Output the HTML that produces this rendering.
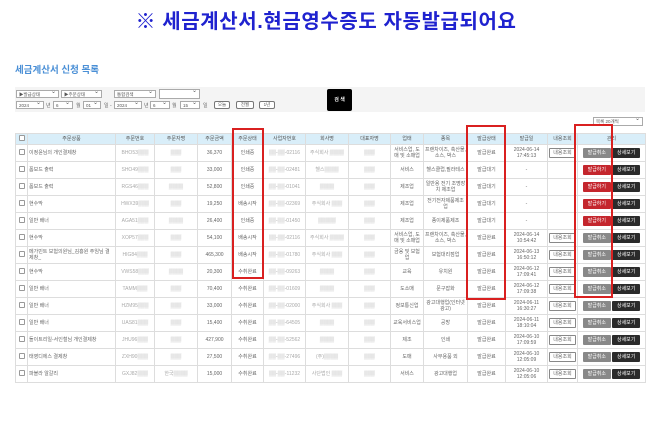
<!DOCTYPE html>
<html><head><meta charset="utf-8"><style>
*{margin:0;padding:0;box-sizing:border-box}
body{width:652px;height:444px;background:#fff;font-family:"Liberation Sans","Noto Sans CJK KR",sans-serif;position:relative;overflow:hidden;color:#555}
.a{position:absolute}
h1{position:absolute;left:0;width:652px;top:5px;text-align:center;font-size:20px;font-weight:bold;color:#1f22cf;font-family:"Liberation Sans","Noto Sans CJK KR",sans-serif;letter-spacing:0.6px}
.sub{left:15px;top:62px;font-size:9.5px;color:#4a8fd6;font-weight:bold}
.bar{left:15px;top:87px;width:630px;height:25px;background:#f4f4f4}
.sel{position:absolute;height:8px;border:1px solid #aaa;background:#fff;font-size:4.5px;line-height:7px;padding-left:2px;color:#555}
.sel:after{content:"⌄";position:absolute;right:2px;top:-2px;font-size:6px}
.t{position:absolute;font-size:5px;color:#666;top:102px}
.btn{position:absolute;top:101px;height:8px;border:1px solid #777;border-radius:2px;font-size:4.5px;line-height:6px;text-align:center;background:#fff}
.srch{left:327px;top:89px;width:25px;height:22px;background:#000;color:#fff;font-size:5px;text-align:center;line-height:22px;border-radius:2px;font-weight:bold}
table{position:absolute;left:15px;top:133px;width:630px;border-collapse:collapse;table-layout:fixed;font-size:5px;color:#666}
td,th{border:1px solid #ddd;text-align:center;height:17px;line-height:6px;overflow:hidden;padding:0 1px}
th{height:11px;background:#d9eef9;font-weight:normal;color:#555}
td.l{text-align:left}
.cb{display:inline-block;width:6px;height:6px;border:1px solid #999;border-radius:1px;background:#fff}
.b{display:inline-block;width:28px;height:10px;line-height:10px;font-size:5px;color:#fff;border-radius:1px}
.g{background:#888}.r{background:#c4262d}.d{background:#2b2b2b}
.o{display:inline-block;width:27px;height:10px;line-height:8px;border:1px solid #888;border-radius:1px;font-size:5px}
.bl{color:#aaa}
.rb{position:absolute;border:2px solid #d92020}
</style></head><body>
<h1>※ 세금계산서.현금영수증도 자동발급되어요</h1>
<div class="a sub">세금계산서 신청 목록</div>
<div class="a bar"></div>
<div class="sel" style="left:16px;top:90px;width:43px">▶발급상태</div>
<div class="sel" style="left:61px;top:90px;width:41px">▶주문상태</div>
<div class="sel" style="left:114px;top:90px;width:42px">통합검색</div>
<div class="sel" style="left:159px;top:89px;width:41px;height:10px"></div>
<div class="sel" style="left:16px;top:101px;width:28px">2024</div><span class="t" style="left:46px">년</span>
<div class="sel" style="left:53px;top:101px;width:20px">6</div><span class="t" style="left:76px">월</span>
<div class="sel" style="left:83px;top:101px;width:18px">01</div><span class="t" style="left:104px">일 -</span>
<div class="sel" style="left:114px;top:101px;width:28px">2024</div><span class="t" style="left:144px">년</span>
<div class="sel" style="left:150px;top:101px;width:20px">6</div><span class="t" style="left:172px">월</span>
<div class="sel" style="left:180px;top:101px;width:20px">15</div><span class="t" style="left:203px">일</span>
<div class="btn" style="left:214px;width:16px">오늘</div>
<div class="btn" style="left:236px;width:18px">전월</div>
<div class="btn" style="left:259px;width:16px">1년</div>
<div class="a srch">검 색</div>
<div class="sel" style="left:593px;top:117px;width:50px;height:9px">목록 20개씩</div>
<table>
<colgroup><col style="width:12px"><col style="width:88px"><col style="width:39px"><col style="width:43px"><col style="width:34px"><col style="width:32px"><col style="width:42px"><col style="width:43px"><col style="width:42px"><col style="width:33px"><col style="width:44px"><col style="width:38px"><col style="width:42px"><col style="width:30px"><col style="width:68px"></colgroup>
<tr><th><span class="cb"></span></th><th>주문상품</th><th>주문번호</th><th>주문자명</th><th>주문금액</th><th>주문상태</th><th>사업자번호</th><th>회사명</th><th>대표자명</th><th>업태</th><th>종목</th><th>발급상태</th><th>발급일</th><th>내용조회</th><th>관리</th></tr>
<tr><td><span class="cb"></span></td><td class="l">이정윤님의 개인결제창</td><td class="bl">BHO53▒▒▒</td><td class="bl">▒▒▒</td><td>36,370</td><td>인쇄중</td><td class="bl">▒▒-▒▒-02116</td><td class="bl">주식회사 ▒▒▒▒</td><td class="bl">▒▒▒</td><td>서비스업, 도매 및 소매업</td><td>프랜차이즈, 축산물, 소스, 박스</td><td>발급완료</td><td>2024-06-14<br>17:45:13</td><td><span class="o">내용조회</span></td><td><span class="b g">발급취소</span> <span class="b d">상세보기</span></td></tr>
<tr><td><span class="cb"></span></td><td class="l">폼보드 출력</td><td class="bl">SHO49▒▒▒</td><td class="bl">▒▒▒</td><td>33,000</td><td>인쇄중</td><td class="bl">▒▒-▒▒-02481</td><td class="bl">헬스▒▒▒▒</td><td class="bl">▒▒▒</td><td>서비스</td><td>헬스클럽,필라테스</td><td>발급대기</td><td>-</td><td></td><td><span class="b r">발급하기</span> <span class="b d">상세보기</span></td></tr>
<tr><td><span class="cb"></span></td><td class="l">폼보드 출력</td><td class="bl">RGS46▒▒▒</td><td class="bl">▒▒▒▒</td><td>52,800</td><td>인쇄중</td><td class="bl">▒▒-▒▒-01041</td><td class="bl">▒▒▒▒</td><td class="bl">▒▒▒</td><td>제조업</td><td>일반용 전기 조명장치 제조업</td><td>발급대기</td><td>-</td><td></td><td><span class="b r">발급하기</span> <span class="b d">상세보기</span></td></tr>
<tr><td><span class="cb"></span></td><td class="l">현수막</td><td class="bl">HWX39▒▒▒</td><td class="bl">▒▒▒</td><td>19,250</td><td>배송시작</td><td class="bl">▒▒-▒▒-02369</td><td class="bl">주식회사 ▒▒▒</td><td class="bl">▒▒▒</td><td>제조업</td><td>전기전자제품제조업</td><td>발급대기</td><td>-</td><td></td><td><span class="b r">발급하기</span> <span class="b d">상세보기</span></td></tr>
<tr><td><span class="cb"></span></td><td class="l">일반 배너</td><td class="bl">AGA51▒▒▒</td><td class="bl">▒▒▒▒</td><td>26,400</td><td>인쇄중</td><td class="bl">▒▒-▒▒-01450</td><td class="bl">▒▒▒▒▒</td><td class="bl">▒▒▒</td><td>제조업</td><td>종이제품제조</td><td>발급대기</td><td>-</td><td></td><td><span class="b r">발급하기</span> <span class="b d">상세보기</span></td></tr>
<tr><td><span class="cb"></span></td><td class="l">현수막</td><td class="bl">XOP57▒▒▒</td><td class="bl">▒▒▒</td><td>54,100</td><td>배송시작</td><td class="bl">▒▒-▒▒-02116</td><td class="bl">주식회사 ▒▒▒▒</td><td class="bl">▒▒▒</td><td>서비스업, 도매 및 소매업</td><td>프랜차이즈, 축산물, 소스, 박스</td><td>발급완료</td><td>2024-06-14<br>10:54:42</td><td><span class="o">내용조회</span></td><td><span class="b g">발급취소</span> <span class="b d">상세보기</span></td></tr>
<tr><td><span class="cb"></span></td><td class="l">메가민트 보험의원님_김흥원 주임님 결제창_</td><td class="bl">HIG84▒▒▒</td><td class="bl">▒▒▒</td><td>465,300</td><td>배송시작</td><td class="bl">▒▒-▒▒-01780</td><td class="bl">주식회사 ▒▒▒</td><td class="bl">▒▒▒</td><td>금융 및 보험업</td><td>보험대리점업</td><td>발급완료</td><td>2024-06-13<br>16:50:12</td><td><span class="o">내용조회</span></td><td><span class="b g">발급취소</span> <span class="b d">상세보기</span></td></tr>
<tr><td><span class="cb"></span></td><td class="l">현수막</td><td class="bl">VWS58▒▒▒</td><td class="bl">▒▒▒▒</td><td>20,300</td><td>수취완료</td><td class="bl">▒▒-▒▒-09263</td><td class="bl">▒▒▒▒</td><td class="bl">▒▒▒</td><td>교육</td><td>유치원</td><td>발급완료</td><td>2024-06-12<br>17:09:41</td><td><span class="o">내용조회</span></td><td><span class="b g">발급취소</span> <span class="b d">상세보기</span></td></tr>
<tr><td><span class="cb"></span></td><td class="l">일반 배너</td><td class="bl">TAMM▒▒▒</td><td class="bl">▒▒▒</td><td>70,400</td><td>수취완료</td><td class="bl">▒▒-▒▒-01609</td><td class="bl">▒▒▒▒</td><td class="bl">▒▒▒</td><td>도소매</td><td>문구잡화</td><td>발급완료</td><td>2024-06-12<br>17:09:38</td><td><span class="o">내용조회</span></td><td><span class="b g">발급취소</span> <span class="b d">상세보기</span></td></tr>
<tr><td><span class="cb"></span></td><td class="l">일반 배너</td><td class="bl">HZM95▒▒▒</td><td class="bl">▒▒▒</td><td>33,000</td><td>수취완료</td><td class="bl">▒▒-▒▒-02000</td><td class="bl">주식회사 ▒▒▒</td><td class="bl">▒▒▒</td><td>정보통신업</td><td>광고대행업(인터넷광고)</td><td>발급완료</td><td>2024-06-11<br>16:30:27</td><td><span class="o">내용조회</span></td><td><span class="b g">발급취소</span> <span class="b d">상세보기</span></td></tr>
<tr><td><span class="cb"></span></td><td class="l">일반 배너</td><td class="bl">UAS81▒▒▒</td><td class="bl">▒▒▒</td><td>15,400</td><td>수취완료</td><td class="bl">▒▒-▒▒-64505</td><td class="bl">▒▒▒▒</td><td class="bl">▒▒▒</td><td>교육서비스업</td><td>공방</td><td>발급완료</td><td>2024-06-11<br>18:10:04</td><td><span class="o">내용조회</span></td><td><span class="b g">발급취소</span> <span class="b d">상세보기</span></td></tr>
<tr><td><span class="cb"></span></td><td class="l">돌이트리일-서인철님 개인결제창</td><td class="bl">JHU96▒▒▒</td><td class="bl">▒▒▒</td><td>427,900</td><td>수취완료</td><td class="bl">▒▒-▒▒-52562</td><td class="bl">▒▒▒▒</td><td class="bl">▒▒▒</td><td>제조</td><td>인쇄</td><td>발급완료</td><td>2024-06-10<br>17:09:59</td><td><span class="o">내용조회</span></td><td><span class="b g">발급취소</span> <span class="b d">상세보기</span></td></tr>
<tr><td><span class="cb"></span></td><td class="l">태영디에스 결제창</td><td class="bl">ZXH90▒▒▒</td><td class="bl">▒▒▒</td><td>27,500</td><td>수취완료</td><td class="bl">▒▒-▒▒-27496</td><td class="bl">(주)▒▒▒▒</td><td class="bl">▒▒▒</td><td>도매</td><td>사무용품 외</td><td>발급완료</td><td>2024-06-10<br>12:05:09</td><td><span class="o">내용조회</span></td><td><span class="b g">발급취소</span> <span class="b d">상세보기</span></td></tr>
<tr><td><span class="cb"></span></td><td class="l">파블라 알갈리</td><td class="bl">GXJ82▒▒▒</td><td class="bl">한국▒▒▒▒</td><td>15,000</td><td>수취완료</td><td class="bl">▒▒-▒▒-11232</td><td class="bl">사단법인 ▒▒▒</td><td class="bl">▒▒▒</td><td>서비스</td><td>광고대행업</td><td>발급완료</td><td>2024-06-10<br>12:05:06</td><td><span class="o">내용조회</span></td><td><span class="b g">발급취소</span> <span class="b d">상세보기</span></td></tr>
</table>
<div class="rb" style="left:232px;top:128px;width:32px;height:151px"></div>
<div class="rb" style="left:466px;top:125px;width:40px;height:175px"></div>
<div class="rb" style="left:574px;top:124px;width:39px;height:174px"></div>
</body></html>
